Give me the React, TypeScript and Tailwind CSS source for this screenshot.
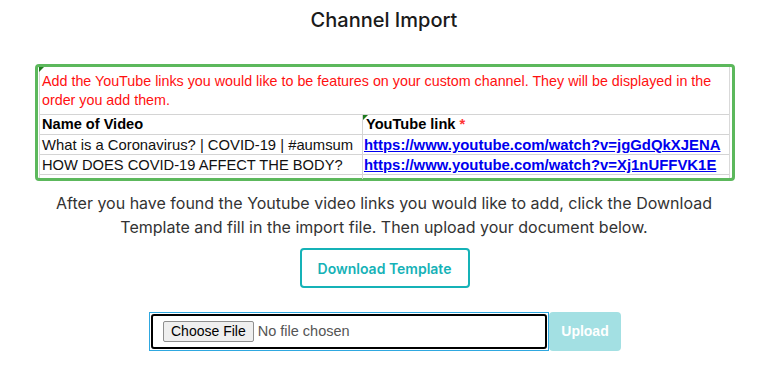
import React from "react";

const excel = { fontFamily: '"Liberation Sans", Arial, sans-serif' };

export default function App() {
  return (
    <div className="w-[768px] h-[370px] bg-white overflow-hidden" style={{ fontFamily: 'Inter, "Noto Sans", sans-serif' }}>
      <h1 className="pt-[6px] text-center text-[20px] leading-[28px] font-medium text-[#1a1a1a]">Channel Import</h1>

      <div className="mt-[30px] ml-[35px] w-[700px] border-[3px] border-[#5cb85c] rounded-[4px] bg-white" style={excel}>
        <div className="relative ml-[1px] mr-[2px] border-l border-r border-[#d9d9d9] h-[111px]">
          <div className="absolute left-[-1px] top-0 w-0 h-0 border-t-[5px] border-t-[#1e7b1e] border-r-[5px] border-r-transparent" />
          <div className="h-[47px] pt-[5px] pl-[2px] text-[14.3px] leading-[19px] text-[#ff1010]">
            Add the YouTube links you would like to be features on your custom channel. They will be displayed in the order you add them.
          </div>
          <div className="grid grid-cols-[323px_1fr] border-t border-[#d4d4d4]">
            <div className="h-[19px] pl-[2px] text-[14.6px] leading-[19px] font-bold text-black border-r border-[#d4d4d4]">Name of Video</div>
            <div className="relative h-[19px] pl-[3px] text-[14.6px] leading-[19px] font-bold text-black">
              <div className="absolute left-0 top-0 w-0 h-0 border-t-[5px] border-t-[#1e7b1e] border-r-[5px] border-r-transparent" />
              YouTube link <span className="text-[#ff3333]">*</span>
            </div>
            <div className="h-[20px] pl-[2px] text-[14.8px] leading-[20px] text-[#111] border-t border-r border-[#d4d4d4]">What is a Coronavirus? | COVID-19 | #aumsum</div>
            <div className="h-[20px] pl-[1px] text-[14.9px] leading-[20px] font-bold text-[#0000ee] underline border-t border-[#d4d4d4]">https://www.youtube.com/watch?v=jgGdQkXJENA</div>
            <div className="h-[20px] pl-[2px] text-[14.7px] leading-[20px] text-[#111] border-t border-r border-[#d4d4d4]">HOW DOES COVID-19 AFFECT THE BODY?</div>
            <div className="h-[20px] pl-[1px] text-[14.9px] leading-[20px] font-bold text-[#0000ee] underline border-t border-[#d4d4d4]">https://www.youtube.com/watch?v=Xj1nUFFVK1E</div>
            <div className="h-[5px] border-t border-r border-[#d4d4d4]" />
            <div className="h-[5px] border-t border-[#d4d4d4]" />
          </div>
        </div>
      </div>

      <p className="mt-[10px] text-center text-[16px] leading-[24px] text-[#333]">
        After you have found the Youtube video links you would like to add, click the Download
        <br />
        Template and fill in the import file. Then upload your document below.
      </p>

      <div className="mt-[9px] flex justify-center">
        <button className="w-[170px] h-[40px] ml-[1px] border-2 border-[#15b2b7] rounded-[4px] text-[14px] font-semibold text-[#15b2b7] bg-white">
          Download Template
        </button>
      </div>

      <div className="mt-[24px] ml-[149px] flex items-stretch">
        <div className="w-[400px] h-[39px] border border-[#2fa8e0] p-[1px]">
          <div className="h-full border-2 border-black rounded-[3px] flex items-center pl-[10px]" style={excel}>
            <span className="h-[21px] px-[7px] flex items-center border border-[#8f8f8f] rounded-[2px] bg-[#efefef] text-[14px] text-black">Choose File</span>
            <span className="ml-[4px] text-[14.5px] text-[#555]">No file chosen</span>
          </div>
        </div>
        <button className="w-[72px] h-[39px] rounded-[4px] bg-[#a3e0e3] text-white text-[14px] font-bold" style={excel}>
          Upload
        </button>
      </div>
    </div>
  );
}
